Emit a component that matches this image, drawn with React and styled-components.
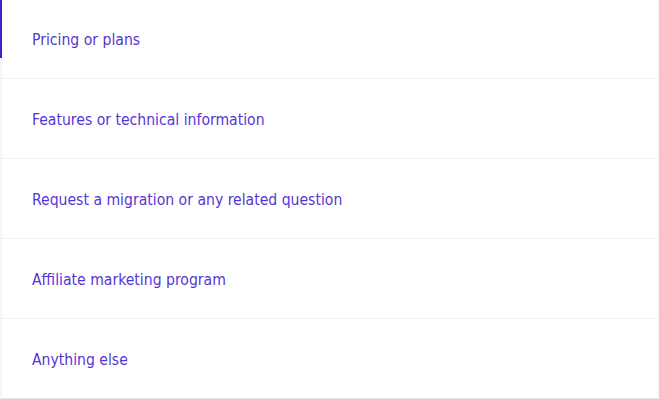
import styled, { createGlobalStyle } from "styled-components";

const Global = createGlobalStyle`
  body {
    margin: 0;
    background: #ffffff;
    font-family: "DejaVu Sans Condensed", "DejaVu Sans", sans-serif;
  }
`;

const List = styled.ul`
  list-style: none;
  margin: -1px 0 0;
  padding: 0;
  width: 659px;
  border-right: 1px solid #f6f6f8;
  box-sizing: border-box;
`;

const Item = styled.li`
  position: relative;
  height: 79px;
  display: flex;
  align-items: center;
  padding-left: 32px;
  border-left: 2px solid #f6f6f8;
  border-bottom: 1px solid ${(p) => (p.$last ? "#e9e9ec" : "#f1f1f3")};
  box-sizing: content-box;
  font-size: 15.6px;
  color: #5536d4;
  cursor: pointer;

  &::before {
    content: "";
    display: ${(p) => (p.$active ? "block" : "none")};
    position: absolute;
    left: -2px;
    top: 1px;
    width: 2px;
    height: 58px;
    background: #3d22c4;
  }
`;

const Label = styled.span`
  margin-left: -2px;
  margin-top: 3px;
`;

const topics = [
  "Pricing or plans",
  "Features or technical information",
  "Request a migration or any related question",
  "Affiliate marketing program",
  "Anything else",
];

export default function App() {
  return (
    <>
      <Global />
      <List>
        {topics.map((t, i) => (
          <Item key={t} $active={i === 0} $last={i === topics.length - 1}>
            <Label>{t}</Label>
          </Item>
        ))}
      </List>
    </>
  );
}
